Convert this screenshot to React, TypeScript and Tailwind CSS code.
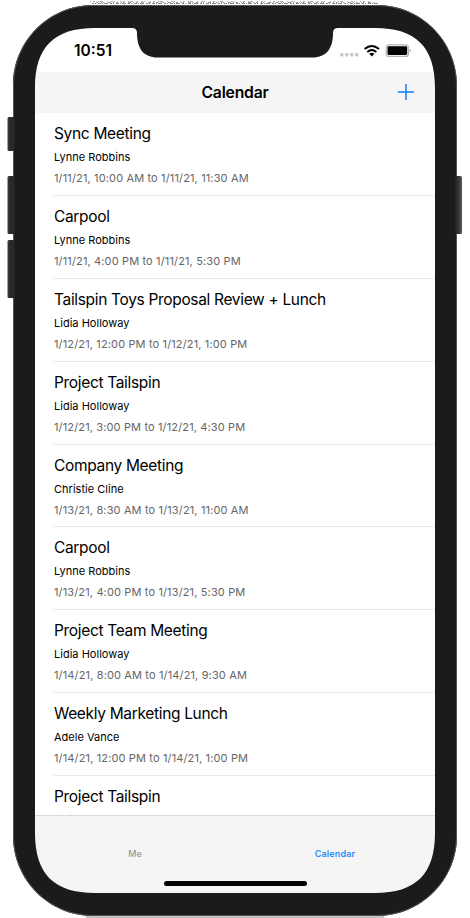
import React from "react";

type Meeting = { subject: string; organizer: string; duration?: string };

const meetings: Meeting[] = [
  { subject: "Sync Meeting", organizer: "Lynne Robbins", duration: "1/11/21, 10:00 AM to 1/11/21, 11:30 AM" },
  { subject: "Carpool", organizer: "Lynne Robbins", duration: "1/11/21, 4:00 PM to 1/11/21, 5:30 PM" },
  { subject: "Tailspin Toys Proposal Review + Lunch", organizer: "Lidia Holloway", duration: "1/12/21, 12:00 PM to 1/12/21, 1:00 PM" },
  { subject: "Project Tailspin", organizer: "Lidia Holloway", duration: "1/12/21, 3:00 PM to 1/12/21, 4:30 PM" },
  { subject: "Company Meeting", organizer: "Christie Cline", duration: "1/13/21, 8:30 AM to 1/13/21, 11:00 AM" },
  { subject: "Carpool", organizer: "Lynne Robbins", duration: "1/13/21, 4:00 PM to 1/13/21, 5:30 PM" },
  { subject: "Project Team Meeting", organizer: "Lidia Holloway", duration: "1/14/21, 8:00 AM to 1/14/21, 9:30 AM" },
  { subject: "Weekly Marketing Lunch", organizer: "Adele Vance", duration: "1/14/21, 12:00 PM to 1/14/21, 1:00 PM" },
  { subject: "Project Tailspin", organizer: "Lidia Holloway" },
];

const OUTER =
  "M13 85C13 41 49 5 93 5H377C421 5 457 41 457 85V836C457 880 421 916 377 916H93C49 916 13 880 13 836Z";
const SCREEN =
  "M35 88C35 47 54 28 95 28H132Q137 28 137 33C137 48 143 57.5 158 57.5H312C327 57.5 333 48 333 33Q333 28 338 28H375C416 28 435 47 435 88V833C435 874 416 893 375 893H95C54 893 35 874 35 833Z";

function DeviceFrame() {
  return (
    <svg className="pointer-events-none absolute inset-0" width="470" height="918" viewBox="0 0 470 918">
      <defs>
        <linearGradient id="leftKey">
          <stop offset="0" stopColor="#4a4a4a" />
          <stop offset="0.25" stopColor="#2b2b2b" />
          <stop offset="1" stopColor="#292929" />
        </linearGradient>
        <linearGradient id="rightKey">
          <stop offset="0" stopColor="#222" />
          <stop offset="0.5" stopColor="#353535" />
          <stop offset="1" stopColor="#5a5a5a" />
        </linearGradient>
      </defs>
      <path d="M90 1.5H370" stroke="#aaa" strokeWidth="1" strokeDasharray="1 2 2 3 1 1 3 4 1 3 2 1 1 5" />
      <path d="M96 2.5H374" stroke="#999" strokeWidth="1" strokeDasharray="2 3 1 1 1 4 3 2 1 2" />
      <path d="M92 3.5H378" stroke="#888" strokeWidth="1" strokeDasharray="2 1 1 2 3 1 1 1 4 2" />
      <path d={OUTER + SCREEN} fill="#1b1b1b" fillRule="evenodd" />
      <path
        d="M13.5 85C13.5 41 49 5.5 93 5.5H377C421 5.5 456.5 41 456.5 85V836C456.5 880 421 915.5 377 915.5H93C49 915.5 13.5 880 13.5 836Z"
        fill="none"
        stroke="#555"
      />
      <path d="M86 917H384" stroke="#888" />
      <rect x="7.5" y="117" width="7" height="34" rx="1.5" fill="url(#leftKey)" />
      <rect x="7.5" y="176" width="7" height="58" rx="1.5" fill="url(#leftKey)" />
      <rect x="7.5" y="240" width="7" height="58" rx="1.5" fill="url(#leftKey)" />
      <rect x="455" y="176" width="7" height="58" rx="1.5" fill="url(#rightKey)" />
    </svg>
  );
}

function StatusBar() {
  return (
    <div className="flex h-11 shrink-0 items-start justify-between pr-[22px] pl-[39px]">
      <span className="mt-[13px] text-[15.5px] leading-5 font-semibold">10:51</span>
      <svg className="mt-[14px]" width="74" height="18" viewBox="0 0 74 18">
        <g fill="#c9c9cb">
          <rect x="1" y="11" width="3.4" height="3.4" rx="1" />
          <rect x="6" y="11" width="3.4" height="3.4" rx="1" />
          <rect x="11" y="11" width="3.4" height="3.4" rx="1" />
          <rect x="16" y="11" width="3.4" height="3.4" rx="1" />
        </g>
        <g fill="none" stroke="#000" strokeWidth="2">
          <path d="M25.6 7.1Q32.8 0.9 40 7.1" />
          <path d="M28.3 9.9Q32.8 6.1 37.3 9.9" />
        </g>
        <path d="M30.2 11.8Q32.8 9.6 35.4 11.8L32.8 14.4Z" />
        <rect x="47.2" y="2.8" width="22.3" height="11.6" rx="3" fill="none" stroke="#b3b3b3" strokeWidth="1.2" />
        <rect x="48.5" y="4.2" width="19.7" height="8.8" rx="1.4" />
        <path d="M70.6 7Q73.2 8.7 70.6 10.4Z" fill="#a3a3a3" />
      </svg>
    </div>
  );
}

export default function App() {
  return (
    <div className="relative h-[918px] w-[470px] overflow-hidden bg-white px-[35px] pt-7 pb-[25px] font-[Inter,'Liberation_Sans',sans-serif] text-black">
      <div className="flex h-full flex-col overflow-hidden">
        <StatusBar />
        <header className="grid h-[41px] shrink-0 grid-cols-[1fr_auto_1fr] items-center bg-[#f5f5f5]">
          <h1 className="col-start-2 text-[15.7px] leading-5 font-semibold tracking-[-0.18px]">Calendar</h1>
          <button className="mr-[21px] mb-px justify-self-end" aria-label="New event">
            <svg width="16" height="16" viewBox="0 0 16 16" stroke="#0a7cff" strokeWidth="1.5">
              <path d="M8 0V16M0 8H16" />
            </svg>
          </button>
        </header>
        <ul className="min-h-0 flex-1 overflow-hidden">
          {meetings.map((m, i) => (
            <li key={i} className="ml-[19px] flex h-[82.89px] flex-col border-b border-[#e8e8e8] pt-[11px]">
              <h2 className="text-[15.5px] leading-5 tracking-[-0.33px] whitespace-nowrap">{m.subject}</h2>
              <p className="mt-[5px] text-[11px] leading-4 tracking-[0.02px] whitespace-nowrap">{m.organizer}</p>
              {m.duration && (
                <p className="mt-[5px] text-[11px] leading-4 tracking-[0.14px] whitespace-nowrap text-[#666]">{m.duration}</p>
              )}
            </li>
          ))}
        </ul>
        <footer className="flex h-[78px] shrink-0 flex-col items-center border-t border-[#dcdcdc] bg-[#f5f5f5]">
          <nav className="grid w-full grid-cols-2 pt-[32px] text-center text-[9px] leading-3 font-medium">
            <span className="text-[#999]">Me</span>
            <span className="font-semibold tracking-[0.15px] text-[#2a8cff]">Calendar</span>
          </nav>
          <div className="mt-[21px] h-[5px] w-[143px] rounded-full bg-black" />
        </footer>
      </div>
      <DeviceFrame />
    </div>
  );
}
